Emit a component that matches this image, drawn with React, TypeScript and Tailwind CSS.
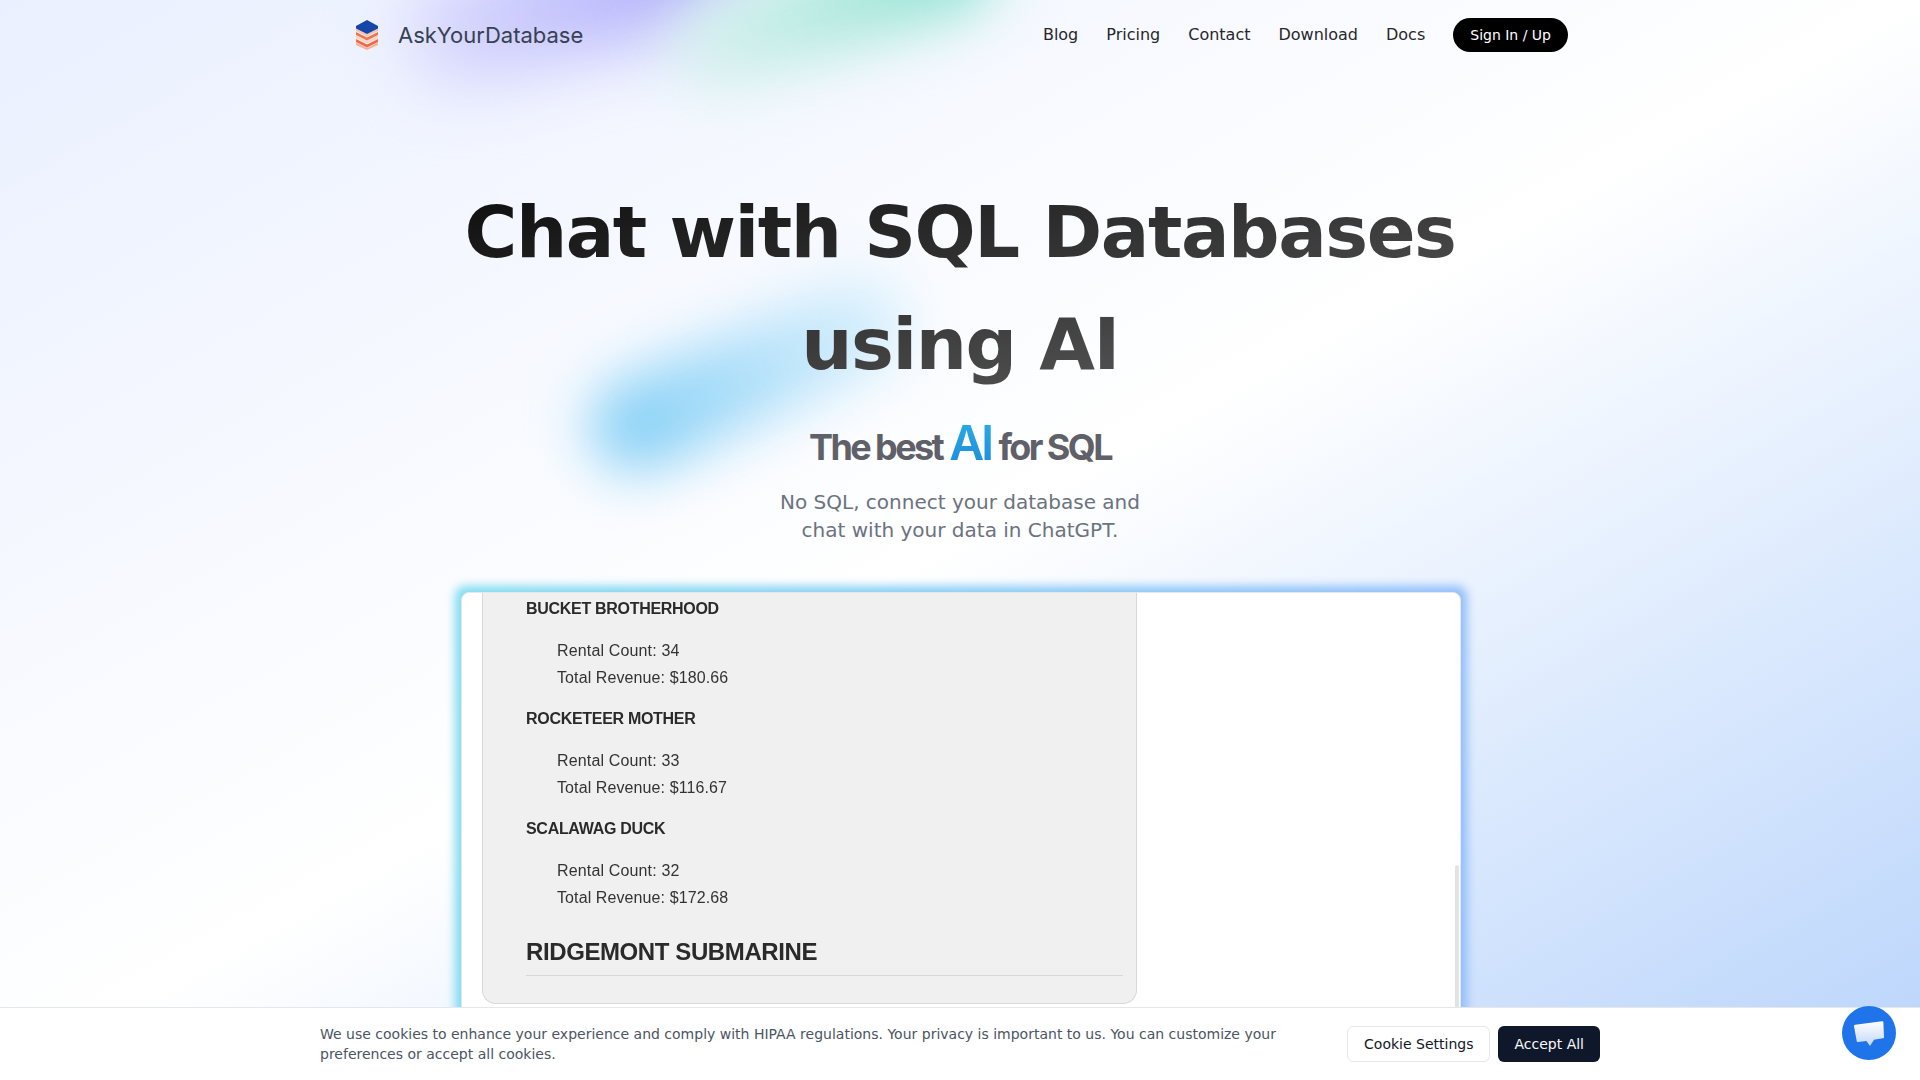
const NAV_LINKS = ["Blog", "Pricing", "Contact", "Download", "Docs"];

const FILMS = [
  { title: "BUCKET BROTHERHOOD", count: 34, revenue: "$180.66" },
  { title: "ROCKETEER MOTHER", count: 33, revenue: "$116.67" },
  { title: "SCALAWAG DUCK", count: 32, revenue: "$172.68" },
];

function Logo() {
  return (
    <svg width="22" height="30" viewBox="0 0 22 30" aria-hidden="true">
      <path d="M0 22.5 11 28 22 22.5V25L11 30 0 25Z" fill="#f8b196" />
      <path d="M0 19 11 24.5 22 19V22L11 27.5 0 22Z" fill="#ef6a42" />
      <path d="M0 15.5 11 21 22 15.5V18L11 23.5 0 18Z" fill="#fbd3c2" />
      <path d="M0 12 11 17.5 22 12V15L11 20.5 0 15Z" fill="#f0744c" />
      <path d="M0 8.5 11 14 22 8.5V11L11 16.5 0 11Z" fill="#fbc4ad" />
      <path d="M0 6 11 0 22 6V8.5L11 14 0 8.5Z" fill="#1546a8" />
    </svg>
  );
}

function ChatGlyph() {
  return (
    <svg width="30" height="25" viewBox="0 0 30 25" aria-hidden="true">
      <defs>
        <linearGradient id="bubble" x1="0" y1="0" x2="0" y2="1">
          <stop offset="0" stopColor="#ffffff" />
          <stop offset="1" stopColor="#c2d7fa" />
        </linearGradient>
      </defs>
      <path
        d="M1.2 3.8 28 0.2C29 0.1 29.4 0.6 29.4 1.4L30 16C30 16.8 29.6 17.2 28.8 17.3L20 18.8 16 25 12.4 20 4 21C3.2 21.1 2.8 20.6 2.7 20L0 5.2C-0.1 4.4 0.4 3.9 1.2 3.8Z"
        fill="url(#bubble)"
      />
    </svg>
  );
}

function FilmBlock({ title, count, revenue }: { title: string; count: number; revenue: string }) {
  return (
    <div className="h-[110px]">
      <p className="text-[16px] leading-[24px] font-bold tracking-[-0.3px] text-[#2a2a2a]">{title}</p>
      <p className="mt-[16px] ml-[31px] text-[16px] leading-[27px] tracking-[0.15px] text-[#333]">Rental Count: {count}</p>
      <p className="ml-[31px] text-[16px] leading-[27px] tracking-[0.1px] text-[#333]">Total Revenue: {revenue}</p>
    </div>
  );
}

export default function App() {
  return (
    <div className="relative h-screen overflow-hidden bg-gradient-to-br from-[#eaf0ff] via-white via-50% to-[#b9d4fb] font-['DejaVu_Sans',sans-serif]">
      {/* blurred colour blobs */}
      <div className="absolute left-[400px] top-[-52px] h-[110px] w-[340px] -rotate-[14deg] rounded-full bg-gradient-to-r from-[#dcdcfd] to-[#a9a3fa] blur-[34px]" />
      <div className="absolute left-[660px] top-[-38px] h-[90px] w-[340px] -rotate-[18deg] rounded-full bg-gradient-to-r from-[#dff3f2] to-[#7fe0cc] blur-[30px]" />
      <div className="absolute left-[580px] top-[328px] h-[95px] w-[340px] -rotate-[24deg] rounded-full bg-gradient-to-r from-[#7accf5] to-[#dff2fd] blur-[28px]" />

      <div className="relative flex flex-col items-center">
        <header className="flex h-[70px] w-[1216px] items-center justify-between">
          <div className="flex items-center gap-[20px] pl-[4px]">
            <Logo />
            <span className="font-['Inter',sans-serif] text-[22px] text-[#374151]">AskYourDatabase</span>
          </div>
          <nav className="flex items-center gap-7">
            {NAV_LINKS.map((link) => (
              <a key={link} className="text-[16px] text-[#27272a]">
                {link}
              </a>
            ))}
            <button className="h-[34px] rounded-full bg-black px-[17px] text-[14px] text-white">Sign In / Up</button>
          </nav>
        </header>

        <h1 className="mt-[106px] bg-gradient-to-br from-[#0c0c0c] to-[#666] bg-clip-text text-center text-[72px] leading-[112px] font-bold tracking-[-0.02em] text-transparent">
          Chat with SQL Databases
          <br />
          using AI
        </h1>

        <p className="mt-[15px] flex h-[56px] items-baseline gap-[7px] font-['Inter',sans-serif] text-[36px] leading-[56px] font-bold tracking-[-2.6px] text-[#5f6068]">
          The best
          <span className="bg-gradient-to-b from-[#2cb0e4] to-[#1e88dc] bg-clip-text text-[48px] font-semibold tracking-[-3px] text-transparent">AI</span>
          for SQL
        </p>

        <p className="mt-[17px] text-center text-[20px] leading-[28px] text-[#6b7280]">
          No SQL, connect your database and
          <br />
          chat with your data in ChatGPT.
        </p>

        <div className="relative mt-[48px] ml-[2px] w-[1000px]">
          <div className="absolute -inset-[6px] rounded-[10px] bg-gradient-to-r from-[#7fdcf0] to-[#90bdfb] blur-[5px]" />
          <div className="relative h-[600px] overflow-hidden rounded-[8px] border border-[#e5e7eb] bg-white">
            <div className="absolute right-[1px] top-[272px] h-[300px] w-[4px] rounded-full bg-[#e3e3e3]" />
            <div className="ml-[20px] h-[411px] w-[655px] rounded-b-[14px] border border-t-0 border-[#d8d8d8] bg-[#f0f0f0] pl-[43px] pr-[13px] font-['Liberation_Sans',sans-serif]">
              <div className="blur-[0.3px]">
                <div className="h-[4px]" />
                {FILMS.map((film) => (
                  <FilmBlock key={film.title} {...film} />
                ))}
                <h3 className="mt-[7px] border-b border-[#d8d8d8] pb-[5px] text-[24px] leading-[36px] font-bold tracking-[-0.4px] text-[#2a2a2a]">
                  RIDGEMONT SUBMARINE
                </h3>
              </div>
            </div>
          </div>
        </div>
      </div>

      {/* cookie bar */}
      <div className="absolute inset-x-0 bottom-0 flex h-[73px] items-center border-t border-[#e5e7eb] bg-white pl-[320px] pr-[320px]">
        <p className="w-[980px] text-[14px] leading-[20px] text-[#4b5563]">
          We use cookies to enhance your experience and comply with HIPAA regulations. Your privacy is important to us. You can customize your preferences or accept all cookies.
        </p>
        <div className="ml-auto flex gap-2">
          <button className="h-[36px] rounded-[6px] border border-[#e5e7eb] bg-white px-4 text-[14px] text-[#111827]">Cookie Settings</button>
          <button className="h-[36px] rounded-[6px] bg-[#0f172a] px-4 text-[14px] text-[#f8fafc]">Accept All</button>
        </div>
      </div>

      {/* chat launcher */}
      <button className="absolute bottom-[20px] right-[24px] flex h-[54px] w-[54px] items-center justify-center rounded-full bg-[#1f74ea]">
        <ChatGlyph />
      </button>
    </div>
  );
}
